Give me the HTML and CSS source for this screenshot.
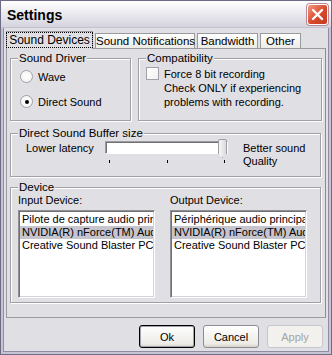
FILE: index.html
```html
<!DOCTYPE html>
<html lang="en">
<head>
    <meta charset="UTF-8">
    <title>Settings</title>
    <link rel="stylesheet" href="styles.css">
</head>
<body>
    <div class="window">
        <div class="titlebar">
            <span class="title">Settings</span>
            <div class="close">
                <svg width="13" height="13" viewBox="0 0 13 13">
                    <path d="M2 2 L11 11 M11 2 L2 11" stroke="#fff" stroke-width="2.4" stroke-linecap="round"/>
                </svg>
            </div>
        </div>

        <div class="content">
            <div class="tabs">
                <div class="tab active"><span class="focus">Sound Devices</span></div>
                <div class="tab notif">Sound Notifications</div>
                <div class="tab bw">Bandwidth</div>
                <div class="tab other">Other</div>
            </div>

            <div class="panel">
                <div class="row-top">
                    <fieldset class="group driver">
                        <legend>Sound Driver</legend>
                        <label class="radio"><span class="dot"></span>Wave</label>
                        <label class="radio"><span class="dot checked"></span>Direct Sound</label>
                    </fieldset>

                    <fieldset class="group compat">
                        <legend>Compatibility</legend>
                        <label class="check"><span class="box"></span>Force 8 bit recording</label>
                        <p class="hint">Check ONLY if experiencing<br>problems with recording.</p>
                    </fieldset>
                </div>

                <fieldset class="group buffer">
                    <legend>Direct Sound Buffer size</legend>
                    <div class="slider-row">
                        <span class="low">Lower latency</span>
                        <div class="slider">
                            <div class="track">
                                <div class="thumb"></div>
                            </div>
                            <div class="ticks"><i></i><i></i><i></i></div>
                        </div>
                        <span class="high">Better sound<br>Quality</span>
                    </div>
                </fieldset>

                <fieldset class="group device">
                    <legend>Device</legend>
                    <div class="lists">
                        <div class="col">
                            <div class="list-label">Input Device:</div>
                            <ul class="listbox">
                                <li>Pilote de capture audio principal</li>
                                <li class="sel">NVIDIA(R) nForce(TM) Audio</li>
                                <li>Creative Sound Blaster PCI</li>
                            </ul>
                        </div>
                        <div class="col">
                            <div class="list-label">Output Device:</div>
                            <ul class="listbox">
                                <li>Périphérique audio principal</li>
                                <li class="sel">NVIDIA(R) nForce(TM) Audio</li>
                                <li>Creative Sound Blaster PCI</li>
                            </ul>
                        </div>
                    </div>
                </fieldset>
            </div>

            <div class="buttons">
                <button class="btn default">Ok</button>
                <button class="btn">Cancel</button>
                <button class="btn" disabled>Apply</button>
            </div>
        </div>
    </div>
</body>
</html>
```

FILE: styles.css
```css
body {
    margin: 0;
    font-family: 'Liberation Sans', Arial, sans-serif;
    font-size: 11px;
    color: #000;
    background: #e0dfe3;
}
.window {
    width: 332px;
    height: 355px;
    box-sizing: border-box;
    border: 1px solid #6d6c84;
    background: #e0dfe3;
    display: flex;
    flex-direction: column;
}
.titlebar {
    height: 27px;
    display: flex;
    align-items: center;
    justify-content: space-between;
    padding: 0 3px 0 6px;
    background: linear-gradient(#ffffff, #ecebf0 45%, #d5d4de);
    border-bottom: 1px solid #c3c2d0;
    box-sizing: border-box;
}
.title {
    font-size: 14px;
    font-weight: bold;
    color: #000;
    margin-top: 1px;
}
.close {
    width: 21px;
    height: 21px;
    box-sizing: border-box;
    border: 1px solid #fff;
    border-radius: 3px;
    background: linear-gradient(135deg, #f09a82, #d9482c 55%, #c23a22);
    box-shadow: 0 0 0 1px #b9899a;
    display: flex;
    align-items: center;
    justify-content: center;
}
.content {
    flex: 1;
    display: flex;
    flex-direction: column;
    padding: 3px 3px 0 3px;
    border-left: 2px solid #c5c4d4;
    border-right: 2px solid #c5c4d4;
    border-bottom: 2px solid #c5c4d4;
    box-shadow: inset 1px 0 #8e8da4, inset -1px 0 #8e8da4, inset 0 -1px #8e8da4;
}
.tabs {
    display: flex;
    align-items: flex-end;
    height: 17px;
    position: relative;
    z-index: 1;
}
.tab {
    height: 15px;
    line-height: 15px;
    box-sizing: border-box;
    border: 1px solid #9a9a9e;
    border-bottom: none;
    background: linear-gradient(#ffffff, #ecebe6);
    margin-left: 2px;
    white-space: nowrap;
    text-align: center;
}
.tab.active {
    width: 87px;
    height: 18px;
    line-height: 16px;
    margin-left: 0;
    margin-bottom: -1px;
    background: #e0dfe3;
    font-size: 12px;
}
.notif {
    width: 100px;
    font-size: 11.5px;
}
.bw {
    width: 61px;
    font-size: 11.5px;
}
.other {
    width: 41px;
    font-size: 11.5px;
}
.focus {
    outline: 1px dotted #000;
    outline-offset: 0;
    padding: 0 2px;
}
.panel {
    height: 270px;
    box-sizing: border-box;
    border: 1px solid #9a9a9e;
    border-right-color: #8c8c90;
    padding: 3px 4px 0 3px;
    display: flex;
    flex-direction: column;
}
.row-top {
    display: grid;
    grid-template-columns: 121px 184px;
    gap: 7px;
}
.group {
    margin: 0;
    padding: 0;
    border: 1px solid #a09fa6;
    box-shadow: inset 1px 1px #fff, 1px 1px #fff;
    min-width: 0;
}
.group legend {
    padding: 0 1px;
    margin-left: 7px;
    line-height: 13px;
    font-size: 11.5px;
    background: #e0dfe3;
}
.driver, .compat {
    height: 69px;
    box-sizing: border-box;
}
.radio {
    display: flex;
    align-items: center;
    gap: 5px;
    margin-left: 9px;
    height: 13px;
    margin-top: 5px;
}
.radio + .radio {
    margin-top: 12px;
}
.dot {
    width: 11px;
    height: 11px;
    border-radius: 50%;
    border: 1px solid #a2a1aa;
    background: radial-gradient(#ffffff, #f2f1ee);
    display: flex;
    align-items: center;
    justify-content: center;
}
.dot.checked::after {
    content: "";
    width: 4px;
    height: 4px;
    border-radius: 50%;
    background: #000;
}
.check {
    display: flex;
    align-items: center;
    gap: 5px;
    margin: 2px 0 0 7px;
    height: 13px;
}
.box {
    width: 11px;
    height: 11px;
    border: 1px solid #a2a1aa;
    background: linear-gradient(135deg, #fff, #f2f1ee);
}
.hint {
    margin: 1px 0 0 25px;
    line-height: 14px;
}
.buffer {
    margin-top: 6px;
    height: 50px;
    box-sizing: border-box;
}
.slider-row {
    display: flex;
    align-items: flex-start;
    padding-left: 15px;
    margin-top: 1px;
}
.low {
    width: 79px;
    line-height: 13px;
    padding-top: 1px;
}
.slider {
    width: 123px;
}
.track {
    height: 13px;
    box-sizing: border-box;
    background: #fff;
    border: 1px solid #9d9da1;
    border-right-color: #fff;
    border-bottom-color: #fff;
    box-shadow: inset 1px 1px #6f6f74;
    display: flex;
    justify-content: flex-end;
}
.thumb {
    width: 7px;
    height: 17px;
    margin-top: -3px;
    background: linear-gradient(90deg, #f7f7f7, #d9d9de);
    border: 1px solid #9c9ca0;
    border-radius: 2px 2px 0 0;
    clip-path: polygon(0 0, 100% 0, 100% 75%, 50% 100%, 0 75%);
}
.ticks {
    display: flex;
    justify-content: space-between;
    padding: 0 3px 0 4px;
    margin-top: 6px;
}
.ticks i {
    width: 1px;
    height: 3px;
    background: #000;
}
.high {
    margin-left: 15px;
    line-height: 13px;
    padding-top: 1px;
}
.device {
    margin-top: 4px;
    height: 122px;
    box-sizing: border-box;
}
.lists {
    display: grid;
    grid-template-columns: 137px 137px;
    gap: 15px;
    padding-left: 7px;
}
.list-label {
    line-height: 13px;
    margin-bottom: 3px;
}
.listbox {
    list-style: none;
    margin: 0;
    padding: 2px 1px;
    height: 88px;
    box-sizing: border-box;
    background: #fff;
    border: 1px solid #8f8f94;
    border-right-color: #fff;
    border-bottom-color: #fff;
    box-shadow: inset 1px 1px #6f6f74, inset -1px -1px #d4d3d8;
    overflow: hidden;
}
.listbox li {
    height: 13px;
    line-height: 13px;
    padding-left: 2px;
    white-space: nowrap;
    overflow: hidden;
}
.listbox li.sel {
    background: #c6c5ce;
}
.buttons {
    display: flex;
    justify-content: flex-end;
    gap: 8px;
    padding: 7px 3px 0 0;
}
.btn {
    width: 56px;
    height: 23px;
    font-family: 'Liberation Sans', Arial, sans-serif;
    font-size: 11px;
    color: #000;
    background: linear-gradient(#ffffff, #ecebe6 85%, #d6d0c5);
    border: 1px solid #8d8c94;
    border-radius: 3px;
    padding: 0;
}
.btn.default {
    border-color: #000;
    box-shadow: inset 0 0 0 1px #a3a2ad;
}
.btn:disabled {
    color: #a4a4a8;
    background: #f2f1ee;
    border-color: #c7c6cc;
}
```
